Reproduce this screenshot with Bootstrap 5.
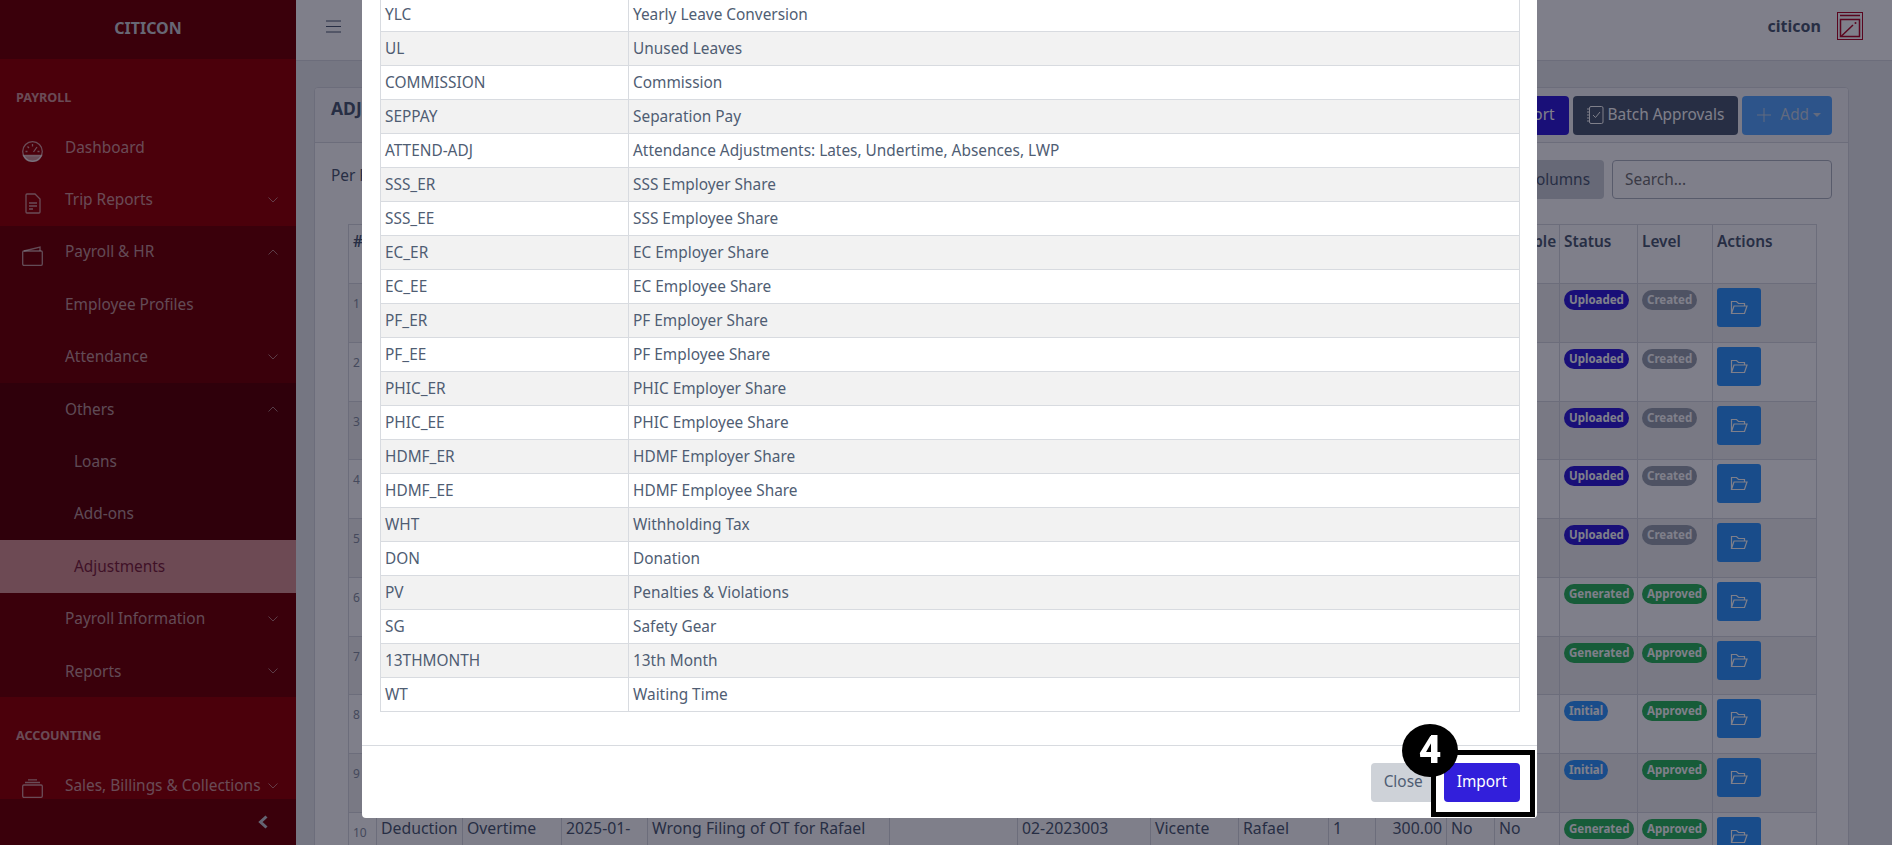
<!DOCTYPE html>
<html lang="en">
<head>
  <meta charset="UTF-8">
  <title>Adjustments</title>
  <link href="https://cdn.jsdelivr.net/npm/bootstrap@5.3.3/dist/css/bootstrap.min.css" rel="stylesheet">
  <style>
    html, body { height: 100%; overflow: hidden; }
    body { font-family: "Noto Sans", sans-serif; font-size: 15.4px; background: #ebedef; color: #4f5d73; }
    .app-shell { height: 845px; }

    .side-bar { width: 296px; flex: none; height: 845px; background: #960000; color: #fff; }
    .side-brand { height: 60px; background: #740000; font-weight: 700; font-size: 16px; color: #cfcfd4; padding-bottom: 4px; }
    .side-scroll { flex: 1 1 auto; overflow: hidden; }
    .side-title { font-size: 12.6px; font-weight: 700; padding-top: 28px; height: 62px; line-height: 21px; padding-left: 16px; color: rgba(255,255,255,.6); }
    .side-link { height: 52.4px; color: rgba(255,255,255,.6); padding-left: 65px; padding-right: 18px; position: relative; }
    .side-link svg.lead-ico { position: absolute; left: 22px; top: 20px; }
    .side-group { background: #740000; }
    .side-sub { background: #5e0000; }
    .side-sub .side-link { padding-left: 74px; }
    .side-sub .side-link.side-first { padding-left: 65px; }
    .side-active { background: #da9493; color: #7f2438 !important; }
    .side-foot { height: 46px; flex: none; background: #740000; padding-right: 28px; }

    .top-bar { height: 61px; background: #fff; border-bottom: 1px solid #d8dbe0; padding: 0 29px 8px 30px; }
    .top-name { font-weight: 700; font-size: 16px; }
    .main-card { margin: 26px 43px 0 18px; background: #fff; border: 1px solid #d8dbe0; border-radius: 4px; height: 780px; overflow: hidden; }
    .main-head { height: 55px; background: #f7f7f8; border-bottom: 1px solid #d8dbe0; padding: 0 16px; }
    .main-title { font-size: 17.5px; font-weight: 700; margin-bottom: 13px; }
    .act-btn { height: 39px; font-size: 15.4px; padding: 0 14px; border: 0; border-radius: 4px; color: #fff; }
    .btn-violet { background: #321fdb; }
    .btn-navy { background: #4f5d73; }
    .btn-azure { background: #5aa9ff; color: #c4d4e6; padding-right: 11px; }
    .btn-greyish { background: #ced2d8; color: #4f5d73; }
    .filter-row { height: 81px; padding: 17px 16px 0; }
    .search-box { width: 220px; height: 39px; font-size: 15.4px; border: 1px solid #b1b7c1; border-radius: 4px; padding: 0 12px; }
    .data-wrap { padding-left: 33px; }
    .data-grid { table-layout: fixed; width: 1468px; border-collapse: collapse; font-size: 15.8px; }
    .data-grid th, .data-grid td { border: 1px solid #d8dbe0; padding: 4px; vertical-align: top; height: 58.75px; overflow: hidden; white-space: nowrap; }
    .data-grid th { font-weight: 600; font-size: 15.4px; padding-top: 5px; height: 59px; }
    .data-grid tbody tr:nth-child(odd) td { background: #f2f2f3; }
    .data-grid td.row-num { font-size: 12px; color: #8a93a2; padding-top: 11px; }
    .pill { display: inline-block; font-size: 11.5px; font-weight: 700; color: #fff; padding: 2px 5px; border-radius: 10px; line-height: 16px; margin-top: 2px; vertical-align: top; }
    .pill-up { background: #321fdb; }
    .pill-gen { background: #2eb85c; }
    .pill-init { background: #3399ff; }
    .pill-made { background: #9da5b1; }
    .open-btn { width: 44px; height: 39px; background: #3399ff; border-radius: 3px; }

    .dim-layer { position: fixed; inset: 0; background: rgba(0,0,21,.5); }
    .modal-holder { position: fixed; inset: 0; overflow: hidden; padding: 0 0 27px 362px; }
    .import-dialog { width: 1175px; background: #fff; border-radius: 4px; }
    .import-body { padding: 0 17px 33px 18px; }
    .code-table { width: 1140px; table-layout: fixed; border-collapse: collapse; font-size: 15.4px; color: #4f5d73; }
    .code-table td { border: 1px solid #d8dbe0; height: 34px; padding: 0 4px; line-height: 20px; }
    .code-table tr:nth-child(even) td { background: #f2f2f2; }
    .import-foot { height: 73px; border-top: 1px solid #d8dbe0; padding: 0 17px 0 0; gap: 8px; }
    .foot-btn { height: 39px; font-size: 15.4px; border: 0; border-radius: 4px; padding: 0 13px; }

    .step-box { position: absolute; left: 1431px; top: 750px; width: 104px; height: 67px; border: 5px solid #000; }
    .step-dot { position: absolute; left: 1402px; top: 724px; width: 56px; height: 53px; background: #000; color: #fff; border-radius: 50%; font-family: Roboto, sans-serif; font-weight: 900; font-size: 39px; line-height: 53px; text-align: center; }
  </style>
</head>
<body>
  <div class="d-flex app-shell">

    <!-- Sidebar -->
    <div class="side-bar d-flex flex-column">
      <div class="side-brand d-flex align-items-center justify-content-center">CITICON</div>
      <div class="side-scroll">
        <div class="side-title">PAYROLL</div>
        <div class="side-link d-flex align-items-center"><svg class="lead-ico" width="21" height="21" viewBox="0 0 21 21" fill="none" stroke="currentColor" stroke-width="1.3"><circle cx="10.500" cy="10.500" r="9.800"/><path d="M10.500 3v2.500M3.500 10.500h2M17.500 10.500h-2M5.500 5.500l1.500 1.500M15 6l-3.500 5"/><path d="M1.500 14.500h18a9.800 9.800 0 0 1-18 0z" fill="currentColor"/></svg>Dashboard</div>
        <div class="side-link d-flex align-items-center justify-content-between"><svg class="lead-ico" width="16" height="21" viewBox="0 0 16 21" fill="none" stroke="currentColor" stroke-width="1.3" style="left:25px"><path d="M1 2a1 1 0 0 1 1-1h8l5 5v13a1 1 0 0 1-1 1H2a1 1 0 0 1-1-1zM4 10h8M4 13h8M4 16h4"/></svg>Trip Reports<svg width="10" height="6" viewBox="0 0 10 6" fill="none" stroke="currentColor" stroke-width=".8"><path d="M.5.500L5 5 9.500.500"/></svg></div>
        <div class="side-group">
          <div class="side-link d-flex align-items-center justify-content-between"><svg class="lead-ico" width="21" height="20" viewBox="0 0 21 20" fill="none" stroke="currentColor" stroke-width="1.3"><rect x=".7" y="5" width="19.600" height="14.300" rx="1.200"/><path d="M2 5l16-4v4"/></svg>Payroll &amp; HR<svg width="10" height="6" viewBox="0 0 10 6" fill="none" stroke="currentColor" stroke-width=".8"><path d="M.5 5.500L5 1l4.500 4.500"/></svg></div>
          <div class="side-link d-flex align-items-center">Employee Profiles</div>
          <div class="side-link d-flex align-items-center justify-content-between">Attendance<svg width="10" height="6" viewBox="0 0 10 6" fill="none" stroke="currentColor" stroke-width=".8"><path d="M.5.500L5 5 9.500.500"/></svg></div>
          <div class="side-sub">
            <div class="side-link side-first d-flex align-items-center justify-content-between">Others<svg width="10" height="6" viewBox="0 0 10 6" fill="none" stroke="currentColor" stroke-width=".8"><path d="M.5 5.500L5 1l4.500 4.500"/></svg></div>
            <div class="side-link d-flex align-items-center">Loans</div>
            <div class="side-link d-flex align-items-center">Add-ons</div>
            <div class="side-link d-flex align-items-center side-active">Adjustments</div>
          </div>
          <div class="side-link d-flex align-items-center justify-content-between">Payroll Information<svg width="10" height="6" viewBox="0 0 10 6" fill="none" stroke="currentColor" stroke-width=".8"><path d="M.5.500L5 5 9.500.500"/></svg></div>
          <div class="side-link d-flex align-items-center justify-content-between">Reports<svg width="10" height="6" viewBox="0 0 10 6" fill="none" stroke="currentColor" stroke-width=".8"><path d="M.5.500L5 5 9.500.500"/></svg></div>
        </div>
        <div class="side-title">ACCOUNTING</div>
        <div class="side-link d-flex align-items-center justify-content-between"><svg class="lead-ico" width="21" height="19" viewBox="0 0 21 19" fill="none" stroke="currentColor" stroke-width="1.3"><rect x=".7" y="6" width="19.600" height="12.300" rx="1.200"/><path d="M3 3.500h15M6 .8h9"/></svg>Sales, Billings &amp; Collections<svg width="10" height="6" viewBox="0 0 10 6" fill="none" stroke="currentColor" stroke-width=".8"><path d="M.5.500L5 5 9.500.500"/></svg></div>
      </div>
      <div class="side-foot d-flex align-items-center justify-content-end"><svg width="10" height="14" viewBox="0 0 10 14" fill="none" stroke="#c9c9d0" stroke-width="3"><path d="M8.500 1.500L2.500 7l6 5.500"/></svg></div>
    </div>

    <!-- Main -->
    <div class="flex-grow-1">
      <div class="top-bar d-flex align-items-center justify-content-between">
        <svg width="15" height="13" viewBox="0 0 15 13" stroke="#4f5d73"><path d="M0 1h15M0 6.500h15M0 12h15"/></svg>
        <div class="d-flex align-items-center gap-3">
          <span class="top-name">citicon</span>
          <svg width="26" height="28" viewBox="0 0 26 28" fill="none" stroke="#b50d28"><rect x=".5" y=".5" width="25" height="27"/><path d="M3 3.500h20" stroke-width="1.500"/><rect x="3.500" y="7.500" width="19" height="17" stroke-width="1.500"/><path d="M4 24.500L16 13" stroke-width="1.500"/><circle cx="18.500" cy="11" r="1" fill="#b50d28" stroke="none"/></svg>
        </div>
      </div>
      <div class="main-card">
        <div class="main-head d-flex align-items-center justify-content-between">
          <span class="main-title">ADJUSTMENTS</span>
          <div class="d-flex gap-1">
            <button class="act-btn btn-violet">Import</button>
            <button class="act-btn btn-navy d-flex align-items-center gap-1"><svg width="17" height="18" viewBox="0 0 17 18" fill="none" stroke="currentColor"><rect x="2.500" y=".5" width="13.500" height="17" rx="1.500"/><path d="M0 3h3M0 6h3M0 9h3M0 12h3M0 15h3M6 9l2.500 2.500L13 6"/></svg>Batch Approvals</button>
            <button class="act-btn btn-azure d-flex align-items-center dropdown-toggle"><svg width="16" height="14" viewBox="0 0 16 14" fill="none" stroke="currentColor" class="me-2"><path d="M1 7h14M8 0v14"/></svg>Add</button>
          </div>
        </div>
        <div class="filter-row d-flex justify-content-between">
          <span class="pt-1">Per Page</span>
          <div class="d-flex gap-2">
            <button class="act-btn btn-greyish">Columns</button>
            <input class="search-box" placeholder="Search...">
          </div>
        </div>
        <div class="data-wrap"><table class="data-grid" id="grid"></table></div>
      </div>
    </div>
  </div>

  <div class="dim-layer"></div>

  <div class="modal-holder d-flex align-items-end">
    <div class="import-dialog">
      <div class="import-body"><table class="code-table" id="codes"></table></div>
      <div class="import-foot d-flex align-items-center justify-content-end">
        <button class="foot-btn btn-greyish">Close</button>
        <button class="foot-btn btn-violet text-white">Import</button>
      </div>
    </div>
  </div>

  <div class="step-box"></div>
  <div class="step-dot">4</div>

  <script src="https://cdn.jsdelivr.net/npm/bootstrap@5.3.3/dist/js/bootstrap.bundle.min.js"></script>
  <script>
    const codes = [
      ['YLC', 'Yearly Leave Conversion'], ['UL', 'Unused Leaves'], ['COMMISSION', 'Commission'],
      ['SEPPAY', 'Separation Pay'], ['ATTEND-ADJ', 'Attendance Adjustments: Lates, Undertime, Absences, LWP'],
      ['SSS_ER', 'SSS Employer Share'], ['SSS_EE', 'SSS Employee Share'], ['EC_ER', 'EC Employer Share'],
      ['EC_EE', 'EC Employee Share'], ['PF_ER', 'PF Employer Share'], ['PF_EE', 'PF Employee Share'],
      ['PHIC_ER', 'PHIC Employer Share'], ['PHIC_EE', 'PHIC Employee Share'], ['HDMF_ER', 'HDMF Employer Share'],
      ['HDMF_EE', 'HDMF Employee Share'], ['WHT', 'Withholding Tax'], ['DON', 'Donation'],
      ['PV', 'Penalties & Violations'], ['SG', 'Safety Gear'], ['13THMONTH', '13th Month'], ['WT', 'Waiting Time']
    ];
    document.getElementById('codes').innerHTML =
      '<colgroup><col style="width:248px"><col></colgroup>' +
      codes.map(c => `<tr><td>${c[0]}</td><td>${c[1].replace('&', '&amp;')}</td></tr>`).join('');

    const folder = '<svg width="18" height="15" viewBox="0 0 18 15" fill="none" stroke="#fff" stroke-width="1.200"><path d="M1.500 13.500V1.500h5l2 2h6v2.500M1.500 13.500l2.500-7.500h13l-2.500 7.500z"/></svg>';
    const widths = [28, 86, 99, 86, 242, 128, 133, 88, 90, 47, 71, 48, 65, 78, 75, 104];
    const pills = [
      ['up', 'Uploaded', 'made', 'Created'], ['up', 'Uploaded', 'made', 'Created'], ['up', 'Uploaded', 'made', 'Created'],
      ['up', 'Uploaded', 'made', 'Created'], ['up', 'Uploaded', 'made', 'Created'], ['gen', 'Generated', 'gen', 'Approved'],
      ['gen', 'Generated', 'gen', 'Approved'], ['init', 'Initial', 'gen', 'Approved'], ['init', 'Initial', 'gen', 'Approved'],
      ['gen', 'Generated', 'gen', 'Approved']
    ];
    const heads = ['#', 'Type', 'Category', 'Date', 'Description', '', 'Employee', 'First', 'Last', 'Qty', 'Amount', 'No', 'Taxable', 'Status', 'Level', 'Actions'];
    let grid = '<colgroup>' + widths.map(w => `<col style="width:${w}px">`).join('') + '</colgroup>';
    grid += '<thead><tr>' + heads.map(h => `<th>${h}</th>`).join('') + '</tr></thead><tbody>';
    pills.forEach((p, i) => {
      const last = i === 9;
      const cells = last
        ? ['Deduction', 'Overtime', '2025-01-', 'Wrong Filing of OT for Rafael', '', '02-2023003', 'Vicente', 'Rafael', '1', '300.00', 'No', 'No']
        : ['', '', '', '', '', '', '', '', '', '', '', ''];
      grid += `<tr><td class="row-num">${i + 1}</td>` +
        cells.map((c, n) => `<td${n === 9 ? ' class="text-end"' : ''}>${c}</td>`).join('') +
        `<td><span class="pill pill-${p[0]}">${p[1]}</span></td><td><span class="pill pill-${p[2]}">${p[3]}</span></td>` +
        `<td><div class="open-btn d-flex align-items-center justify-content-center">${folder}</div></td></tr>`;
    });
    document.getElementById('grid').innerHTML = grid + '</tbody>';
  </script>
</body>
</html>
